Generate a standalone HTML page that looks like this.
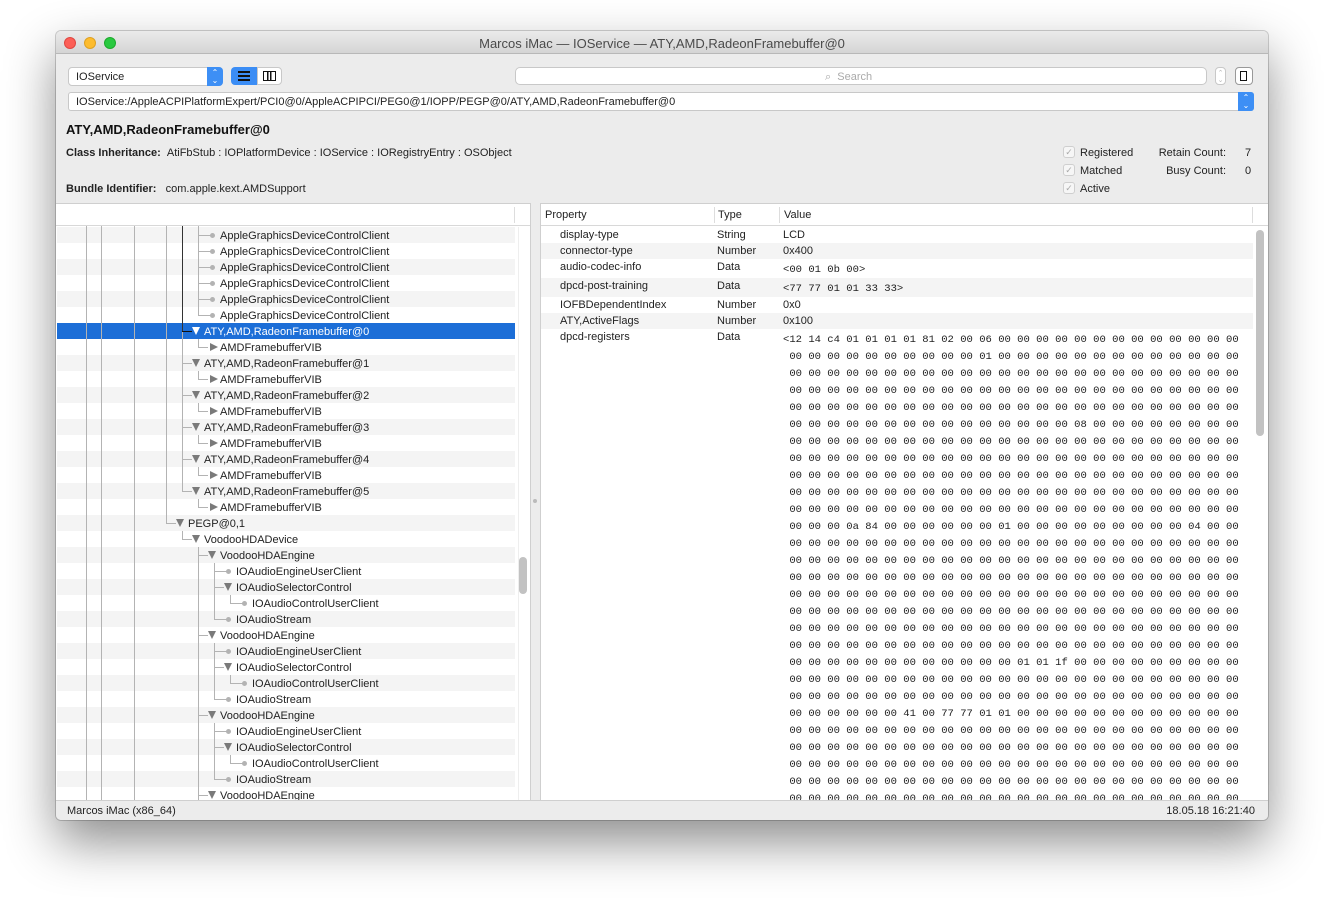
<!DOCTYPE html><html><head><meta charset="utf-8"><style>
*{margin:0;padding:0;box-sizing:border-box}
body{width:1324px;height:900px;background:#fff;position:relative;overflow:hidden;font-family:"Liberation Sans",sans-serif;font-size:11px;color:#222}
.a{position:absolute}
.win{left:56px;top:31px;width:1212px;height:789px;border-radius:5px;background:#ececec;box-shadow:0 22px 50px rgba(0,0,0,.45),0 0 0 1px rgba(0,0,0,.18)}
.tb{left:56px;top:31px;width:1212px;height:23px;border-radius:5px 5px 0 0;background:linear-gradient(#ebebeb,#d5d5d5);border-bottom:1px solid #b8b8b8}
.tl{width:12px;height:12px;border-radius:6px;top:37px}
.fld{background:#fff;border:1px solid #c8c8c8;border-radius:4px}
.t{position:absolute;white-space:nowrap;line-height:16px;padding-top:1px}
.h{position:absolute;height:1px;background:#b3b3b3}
.v{position:absolute;width:1px;background:#b3b3b3}
.dot{position:absolute;width:5px;height:5px;border-radius:3px;background:#b3b3b3}
.to{position:absolute;width:0;height:0;border-left:4.5px solid transparent;border-right:4.5px solid transparent;border-top:8px solid #7a7a7a}
.tc{position:absolute;width:0;height:0;border-top:4.5px solid transparent;border-bottom:4.5px solid transparent;border-left:8px solid #7a7a7a}
.hex{position:absolute;left:783px;font-family:"Liberation Mono",monospace;font-size:10.55px;white-space:pre;line-height:17px;color:#222}
.cb{position:absolute;left:1063px;width:12px;height:12px;border:1px solid #cfcfcf;border-radius:3px;background:#f6f6f6;color:#aaa;font-size:9px;line-height:10px;text-align:center}
</style></head><body>
<div class="a win"></div>
<div class="a tb"></div>
<div class="a tl" style="left:64px;background:#fc5f57;border:1px solid #df4741"></div>
<div class="a tl" style="left:84px;background:#fdbc2e;border:1px solid #dea123"></div>
<div class="a tl" style="left:104px;background:#29c940;border:1px solid #1daa2c"></div>
<div class="t" style="left:0;width:1324px;text-align:center;top:35px;font-size:13px;color:#4a4a4a">Marcos iMac — IOService — ATY,AMD,RadeonFramebuffer@0</div>

<div class="a fld" style="left:68px;top:67px;width:155px;height:19px"></div>
<div class="t" style="left:76px;top:68px">IOService</div>
<div class="a" style="left:207px;top:67px;width:16px;height:19px;background:#3d8ff5;border-radius:0 4px 4px 0;color:#fff;font-size:8px;line-height:8px;text-align:center;padding-top:2px">⌃<br>⌄</div>
<div class="a" style="left:231px;top:67px;width:26px;height:18px;background:#3b8df5;border-radius:4px 0 0 4px"></div>
<div class="a" style="left:238px;top:71px;width:12px;height:10px;border-top:2px solid #111;border-bottom:2px solid #111"><div style="margin-top:2px;height:2px;background:#111"></div></div>
<div class="a fld" style="left:257px;top:67px;width:25px;height:18px;border-radius:0 4px 4px 0"></div>
<div class="a" style="left:263px;top:71px;width:13px;height:10px;border:1.5px solid #111;background:linear-gradient(90deg,transparent 3px,#111 3px,#111 4.5px,transparent 4.5px,transparent 6px,#111 6px,#111 7.5px,transparent 7.5px)"></div>
<div class="a fld" style="left:515px;top:67px;width:692px;height:18px;border-radius:5px"></div>
<div class="t" style="left:825px;top:68px;color:#aaa">⌕&nbsp; Search</div>
<div class="a fld" style="left:1215px;top:67px;width:11px;height:18px;color:#bbb;font-size:7px;line-height:7px;text-align:center;padding-top:2px">⌃<br>⌄</div>
<div class="a fld" style="left:1235px;top:67px;width:18px;height:18px;border-color:#999"></div>
<div class="a" style="left:1240px;top:71px;width:7px;height:10px;border:1.5px solid #111"></div>
<div class="a fld" style="left:68px;top:92px;width:1186px;height:19px;border-radius:3px"></div>
<div class="t" style="left:76px;top:93px">IOService:/AppleACPIPlatformExpert/PCI0@0/AppleACPIPCI/PEG0@1/IOPP/PEGP@0/ATY,AMD,RadeonFramebuffer@0</div>
<div class="a" style="left:1238px;top:92px;width:16px;height:19px;background:#3d8ff5;border-radius:0 3px 3px 0;color:#fff;font-size:8px;line-height:8px;text-align:center;padding-top:2px">⌃<br>⌄</div>

<div class="t" style="left:66px;top:121px;font-size:13px;font-weight:bold;color:#111">ATY,AMD,RadeonFramebuffer@0</div>
<div class="t" style="left:66px;top:144px"><b>Class Inheritance:</b>&nbsp;&nbsp;AtiFbStub : IOPlatformDevice : IOService : IORegistryEntry : OSObject</div>
<div class="t" style="left:66px;top:180px"><b>Bundle Identifier:</b>&nbsp;&nbsp;&nbsp;com.apple.kext.AMDSupport</div>
<div class="cb" style="top:146px">✓</div><div class="t" style="left:1080px;top:144px">Registered</div>
<div class="cb" style="top:164px">✓</div><div class="t" style="left:1080px;top:162px">Matched</div>
<div class="cb" style="top:182px">✓</div><div class="t" style="left:1080px;top:180px">Active</div>
<div class="t" style="left:1120px;width:106px;text-align:right;top:144px">Retain Count:</div><div class="t" style="left:1245px;top:144px">7</div>
<div class="t" style="left:1120px;width:106px;text-align:right;top:162px">Busy Count:</div><div class="t" style="left:1245px;top:162px">0</div>

<!-- left pane -->
<div class="a" style="left:56px;top:203px;width:475px;height:597px;background:#fff;border-top:1px solid #cfcfcf;border-right:1px solid #cfcfcf;overflow:hidden">
<div class="a" style="left:0;top:0;width:475px;height:22px;border-bottom:1px solid #d8d8d8"></div>
<div class="a" style="left:458px;top:3px;width:1px;height:16px;background:#ddd"></div>
<div class="a" style="left:462px;top:23px;width:1px;height:574px;background:#eee"></div>
</div>
<div class="a" style="left:57px;top:227px;width:458px;height:16px;background:#f4f4f4"></div>
<div class="a" style="left:57px;top:259px;width:458px;height:16px;background:#f4f4f4"></div>
<div class="a" style="left:57px;top:291px;width:458px;height:16px;background:#f4f4f4"></div>
<div class="a" style="left:57px;top:323px;width:458px;height:16px;background:#1c6ed7"></div>
<div class="a" style="left:57px;top:355px;width:458px;height:16px;background:#f4f4f4"></div>
<div class="a" style="left:57px;top:387px;width:458px;height:16px;background:#f4f4f4"></div>
<div class="a" style="left:57px;top:419px;width:458px;height:16px;background:#f4f4f4"></div>
<div class="a" style="left:57px;top:451px;width:458px;height:16px;background:#f4f4f4"></div>
<div class="a" style="left:57px;top:483px;width:458px;height:16px;background:#f4f4f4"></div>
<div class="a" style="left:57px;top:515px;width:458px;height:16px;background:#f4f4f4"></div>
<div class="a" style="left:57px;top:547px;width:458px;height:16px;background:#f4f4f4"></div>
<div class="a" style="left:57px;top:579px;width:458px;height:16px;background:#f4f4f4"></div>
<div class="a" style="left:57px;top:611px;width:458px;height:16px;background:#f4f4f4"></div>
<div class="a" style="left:57px;top:643px;width:458px;height:16px;background:#f4f4f4"></div>
<div class="a" style="left:57px;top:675px;width:458px;height:16px;background:#f4f4f4"></div>
<div class="a" style="left:57px;top:707px;width:458px;height:16px;background:#f4f4f4"></div>
<div class="a" style="left:57px;top:739px;width:458px;height:16px;background:#f4f4f4"></div>
<div class="a" style="left:57px;top:771px;width:458px;height:16px;background:#f4f4f4"></div>

<!-- verticals -->
<div class="v" style="left:86px;top:226px;height:574px"></div>
<div class="v" style="left:101px;top:226px;height:574px"></div>
<div class="v" style="left:134px;top:226px;height:574px"></div>
<div class="v" style="left:166px;top:226px;height:298px"></div>
<div class="v" style="left:182px;top:226px;height:106px;background:#333"></div>
<div class="v" style="left:182px;top:332px;height:160px"></div>
<div class="v" style="left:198px;top:226px;height:90px"></div>
<div class="v" style="left:198px;top:339px;height:9px"></div>
<div class="v" style="left:198px;top:371px;height:9px"></div>
<div class="v" style="left:198px;top:403px;height:9px"></div>
<div class="v" style="left:198px;top:435px;height:9px"></div>
<div class="v" style="left:198px;top:467px;height:9px"></div>
<div class="v" style="left:198px;top:499px;height:9px"></div>
<div class="v" style="left:182px;top:531px;height:9px"></div>
<div class="v" style="left:198px;top:547px;height:253px"></div>
<div class="v" style="left:214px;top:563px;height:57px"></div>
<div class="v" style="left:214px;top:643px;height:57px"></div>
<div class="v" style="left:214px;top:723px;height:57px"></div>
<div class="v" style="left:230px;top:595px;height:9px"></div>
<div class="v" style="left:230px;top:675px;height:9px"></div>
<div class="v" style="left:230px;top:755px;height:9px"></div>

<div class="h" style="left:198px;top:235px;width:13px"></div><div class="dot" style="left:210px;top:233px"></div><div class="t" style="left:220px;top:227px">AppleGraphicsDeviceControlClient</div>
<div class="h" style="left:198px;top:251px;width:13px"></div><div class="dot" style="left:210px;top:249px"></div><div class="t" style="left:220px;top:243px">AppleGraphicsDeviceControlClient</div>
<div class="h" style="left:198px;top:267px;width:13px"></div><div class="dot" style="left:210px;top:265px"></div><div class="t" style="left:220px;top:259px">AppleGraphicsDeviceControlClient</div>
<div class="h" style="left:198px;top:283px;width:13px"></div><div class="dot" style="left:210px;top:281px"></div><div class="t" style="left:220px;top:275px">AppleGraphicsDeviceControlClient</div>
<div class="h" style="left:198px;top:299px;width:13px"></div><div class="dot" style="left:210px;top:297px"></div><div class="t" style="left:220px;top:291px">AppleGraphicsDeviceControlClient</div>
<div class="h" style="left:198px;top:315px;width:13px"></div><div class="dot" style="left:210px;top:313px"></div><div class="t" style="left:220px;top:307px">AppleGraphicsDeviceControlClient</div>

<div class="h" style="left:182px;top:331px;width:10px;background:#111"></div><div class="to" style="left:192px;top:327px;border-top-color:#fff"></div><div class="t" style="left:204px;top:323px;color:#fff">ATY,AMD,RadeonFramebuffer@0</div>
<div class="h" style="left:198px;top:347px;width:10px"></div><div class="tc" style="left:210px;top:343px"></div><div class="t" style="left:220px;top:339px">AMDFramebufferVIB</div>
<div class="h" style="left:182px;top:363px;width:10px"></div><div class="to" style="left:192px;top:359px"></div><div class="t" style="left:204px;top:355px">ATY,AMD,RadeonFramebuffer@1</div>
<div class="h" style="left:198px;top:379px;width:10px"></div><div class="tc" style="left:210px;top:375px"></div><div class="t" style="left:220px;top:371px">AMDFramebufferVIB</div>
<div class="h" style="left:182px;top:395px;width:10px"></div><div class="to" style="left:192px;top:391px"></div><div class="t" style="left:204px;top:387px">ATY,AMD,RadeonFramebuffer@2</div>
<div class="h" style="left:198px;top:411px;width:10px"></div><div class="tc" style="left:210px;top:407px"></div><div class="t" style="left:220px;top:403px">AMDFramebufferVIB</div>
<div class="h" style="left:182px;top:427px;width:10px"></div><div class="to" style="left:192px;top:423px"></div><div class="t" style="left:204px;top:419px">ATY,AMD,RadeonFramebuffer@3</div>
<div class="h" style="left:198px;top:443px;width:10px"></div><div class="tc" style="left:210px;top:439px"></div><div class="t" style="left:220px;top:435px">AMDFramebufferVIB</div>
<div class="h" style="left:182px;top:459px;width:10px"></div><div class="to" style="left:192px;top:455px"></div><div class="t" style="left:204px;top:451px">ATY,AMD,RadeonFramebuffer@4</div>
<div class="h" style="left:198px;top:475px;width:10px"></div><div class="tc" style="left:210px;top:471px"></div><div class="t" style="left:220px;top:467px">AMDFramebufferVIB</div>
<div class="h" style="left:182px;top:491px;width:10px"></div><div class="to" style="left:192px;top:487px"></div><div class="t" style="left:204px;top:483px">ATY,AMD,RadeonFramebuffer@5</div>
<div class="h" style="left:198px;top:507px;width:10px"></div><div class="tc" style="left:210px;top:503px"></div><div class="t" style="left:220px;top:499px">AMDFramebufferVIB</div>
<div class="h" style="left:166px;top:523px;width:10px"></div><div class="to" style="left:176px;top:519px"></div><div class="t" style="left:188px;top:515px">PEGP@0,1</div>
<div class="h" style="left:182px;top:539px;width:10px"></div><div class="to" style="left:192px;top:535px"></div><div class="t" style="left:204px;top:531px">VoodooHDADevice</div>

<div class="h" style="left:198px;top:555px;width:10px"></div><div class="to" style="left:208px;top:551px"></div><div class="t" style="left:220px;top:547px">VoodooHDAEngine</div>
<div class="h" style="left:214px;top:571px;width:13px"></div><div class="dot" style="left:226px;top:569px"></div><div class="t" style="left:236px;top:563px">IOAudioEngineUserClient</div>
<div class="h" style="left:214px;top:587px;width:10px"></div><div class="to" style="left:224px;top:583px"></div><div class="t" style="left:236px;top:579px">IOAudioSelectorControl</div>
<div class="h" style="left:230px;top:603px;width:13px"></div><div class="dot" style="left:242px;top:601px"></div><div class="t" style="left:252px;top:595px">IOAudioControlUserClient</div>
<div class="h" style="left:214px;top:619px;width:13px"></div><div class="dot" style="left:226px;top:617px"></div><div class="t" style="left:236px;top:611px">IOAudioStream</div>

<div class="h" style="left:198px;top:635px;width:10px"></div><div class="to" style="left:208px;top:631px"></div><div class="t" style="left:220px;top:627px">VoodooHDAEngine</div>
<div class="h" style="left:214px;top:651px;width:13px"></div><div class="dot" style="left:226px;top:649px"></div><div class="t" style="left:236px;top:643px">IOAudioEngineUserClient</div>
<div class="h" style="left:214px;top:667px;width:10px"></div><div class="to" style="left:224px;top:663px"></div><div class="t" style="left:236px;top:659px">IOAudioSelectorControl</div>
<div class="h" style="left:230px;top:683px;width:13px"></div><div class="dot" style="left:242px;top:681px"></div><div class="t" style="left:252px;top:675px">IOAudioControlUserClient</div>
<div class="h" style="left:214px;top:699px;width:13px"></div><div class="dot" style="left:226px;top:697px"></div><div class="t" style="left:236px;top:691px">IOAudioStream</div>

<div class="h" style="left:198px;top:715px;width:10px"></div><div class="to" style="left:208px;top:711px"></div><div class="t" style="left:220px;top:707px">VoodooHDAEngine</div>
<div class="h" style="left:214px;top:731px;width:13px"></div><div class="dot" style="left:226px;top:729px"></div><div class="t" style="left:236px;top:723px">IOAudioEngineUserClient</div>
<div class="h" style="left:214px;top:747px;width:10px"></div><div class="to" style="left:224px;top:743px"></div><div class="t" style="left:236px;top:739px">IOAudioSelectorControl</div>
<div class="h" style="left:230px;top:763px;width:13px"></div><div class="dot" style="left:242px;top:761px"></div><div class="t" style="left:252px;top:755px">IOAudioControlUserClient</div>
<div class="h" style="left:214px;top:779px;width:13px"></div><div class="dot" style="left:226px;top:777px"></div><div class="t" style="left:236px;top:771px">IOAudioStream</div>
<div class="a" style="left:57px;top:787px;width:458px;height:13px;overflow:hidden">
<div class="h" style="left:141px;top:8px;width:10px"></div><div class="to" style="left:151px;top:4px"></div><div class="t" style="left:163px;top:0">VoodooHDAEngine</div></div>
<div class="a" style="left:519px;top:557px;width:8px;height:37px;border-radius:4px;background:#c2c2c2"></div>
<div class="a" style="left:533px;top:499px;width:4px;height:4px;border-radius:2px;background:#bbb"></div>

<!-- right pane -->
<div class="a" style="left:540px;top:203px;width:728px;height:597px;background:#fff;border-top:1px solid #cfcfcf;border-left:1px solid #cfcfcf;overflow:hidden">
<div class="a" style="left:0;top:0;width:728px;height:22px;border-bottom:1px solid #d8d8d8"></div>
<div class="a" style="left:173px;top:3px;width:1px;height:16px;background:#ddd"></div>
<div class="a" style="left:238px;top:3px;width:1px;height:16px;background:#ddd"></div>
<div class="a" style="left:711px;top:3px;width:1px;height:16px;background:#ddd"></div>
<div class="a" style="left:0;top:39px;width:712px;height:16px;background:#f4f4f4"></div>
<div class="a" style="left:0;top:74px;width:712px;height:19px;background:#f4f4f4"></div>
<div class="a" style="left:0;top:109px;width:712px;height:16px;background:#f4f4f4"></div>
</div>
<div class="t" style="left:545px;top:206px">Property</div><div class="t" style="left:718px;top:206px">Type</div><div class="t" style="left:784px;top:206px">Value</div>
<div class="t" style="left:560px;top:226px">display-type</div><div class="t" style="left:717px;top:226px">String</div><div class="t" style="left:783px;top:226px">LCD</div>
<div class="t" style="left:560px;top:242px">connector-type</div><div class="t" style="left:717px;top:242px">Number</div><div class="t" style="left:783px;top:242px">0x400</div>
<div class="t" style="left:560px;top:258px">audio-codec-info</div><div class="t" style="left:717px;top:258px">Data</div><div class="hex" style="top:262px">&lt;00 01 0b 00&gt;</div>
<div class="t" style="left:560px;top:277px">dpcd-post-training</div><div class="t" style="left:717px;top:277px">Data</div><div class="hex" style="top:281px">&lt;77 77 01 01 33 33&gt;</div>
<div class="t" style="left:560px;top:296px">IOFBDependentIndex</div><div class="t" style="left:717px;top:296px">Number</div><div class="t" style="left:783px;top:296px">0x0</div>
<div class="t" style="left:560px;top:312px">ATY,ActiveFlags</div><div class="t" style="left:717px;top:312px">Number</div><div class="t" style="left:783px;top:312px">0x100</div>
<div class="t" style="left:560px;top:328px">dpcd-registers</div><div class="t" style="left:717px;top:328px">Data</div>
<div class="a" style="left:540px;top:330px;width:712px;height:470px;overflow:hidden"><div class="hex" style="left:243px;top:2px">&lt;12 14 c4 01 01 01 01 81 02 00 06 00 00 00 00 00 00 00 00 00 00 00 00 00
 00 00 00 00 00 00 00 00 00 00 01 00 00 00 00 00 00 00 00 00 00 00 00 00
 00 00 00 00 00 00 00 00 00 00 00 00 00 00 00 00 00 00 00 00 00 00 00 00
 00 00 00 00 00 00 00 00 00 00 00 00 00 00 00 00 00 00 00 00 00 00 00 00
 00 00 00 00 00 00 00 00 00 00 00 00 00 00 00 00 00 00 00 00 00 00 00 00
 00 00 00 00 00 00 00 00 00 00 00 00 00 00 00 08 00 00 00 00 00 00 00 00
 00 00 00 00 00 00 00 00 00 00 00 00 00 00 00 00 00 00 00 00 00 00 00 00
 00 00 00 00 00 00 00 00 00 00 00 00 00 00 00 00 00 00 00 00 00 00 00 00
 00 00 00 00 00 00 00 00 00 00 00 00 00 00 00 00 00 00 00 00 00 00 00 00
 00 00 00 00 00 00 00 00 00 00 00 00 00 00 00 00 00 00 00 00 00 00 00 00
 00 00 00 00 00 00 00 00 00 00 00 00 00 00 00 00 00 00 00 00 00 00 00 00
 00 00 00 0a 84 00 00 00 00 00 00 01 00 00 00 00 00 00 00 00 00 04 00 00
 00 00 00 00 00 00 00 00 00 00 00 00 00 00 00 00 00 00 00 00 00 00 00 00
 00 00 00 00 00 00 00 00 00 00 00 00 00 00 00 00 00 00 00 00 00 00 00 00
 00 00 00 00 00 00 00 00 00 00 00 00 00 00 00 00 00 00 00 00 00 00 00 00
 00 00 00 00 00 00 00 00 00 00 00 00 00 00 00 00 00 00 00 00 00 00 00 00
 00 00 00 00 00 00 00 00 00 00 00 00 00 00 00 00 00 00 00 00 00 00 00 00
 00 00 00 00 00 00 00 00 00 00 00 00 00 00 00 00 00 00 00 00 00 00 00 00
 00 00 00 00 00 00 00 00 00 00 00 00 00 00 00 00 00 00 00 00 00 00 00 00
 00 00 00 00 00 00 00 00 00 00 00 00 01 01 1f 00 00 00 00 00 00 00 00 00
 00 00 00 00 00 00 00 00 00 00 00 00 00 00 00 00 00 00 00 00 00 00 00 00
 00 00 00 00 00 00 00 00 00 00 00 00 00 00 00 00 00 00 00 00 00 00 00 00
 00 00 00 00 00 00 41 00 77 77 01 01 00 00 00 00 00 00 00 00 00 00 00 00
 00 00 00 00 00 00 00 00 00 00 00 00 00 00 00 00 00 00 00 00 00 00 00 00
 00 00 00 00 00 00 00 00 00 00 00 00 00 00 00 00 00 00 00 00 00 00 00 00
 00 00 00 00 00 00 00 00 00 00 00 00 00 00 00 00 00 00 00 00 00 00 00 00
 00 00 00 00 00 00 00 00 00 00 00 00 00 00 00 00 00 00 00 00 00 00 00 00
 00 00 00 00 00 00 00 00 00 00 00 00 00 00 00 00 00 00 00 00 00 00 00 00</div></div>
<div class="a" style="left:1256px;top:230px;width:8px;height:206px;border-radius:4px;background:#c2c2c2"></div>

<!-- status -->
<div class="a" style="left:56px;top:800px;width:1212px;height:20px;border-top:1px solid #cfcfcf;border-radius:0 0 5px 5px;background:#ececec"></div>
<div class="t" style="left:67px;top:802px">Marcos iMac (x86_64)</div>
<div class="t" style="left:1100px;width:155px;text-align:right;top:802px">18.05.18 16:21:40</div>
</body></html>
